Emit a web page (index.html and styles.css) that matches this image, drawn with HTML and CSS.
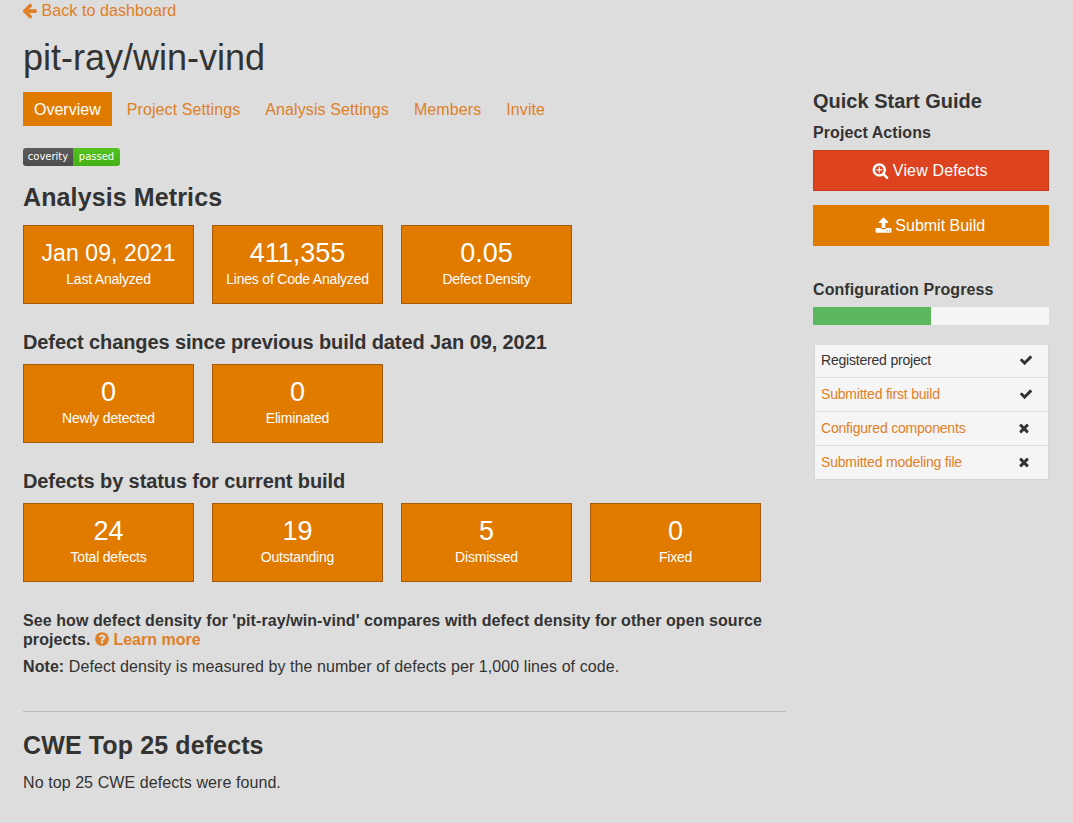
FILE: index.html
```html
<!DOCTYPE html>
<html lang="en">
<head>
<meta charset="utf-8">
<title>pit-ray/win-vind</title>
<link rel="stylesheet" href="styles.css">
</head>
<body>
<div class="page">
  <main class="main">
    <a class="back" href="#"><svg class="icon icon-back" viewBox="0 0 1792 1792"><path d="M1664 896v128q0 53-32.500 90.500t-84.500 37.500h-704l293 294q38 36 38 90t-38 90l-75 76q-37 37-90 37-52 0-91-37l-651-652q-37-37-37-90 0-52 37-91l651-650q38-38 91-38 52 0 90 38l75 74q38 38 38 91t-38 91l-293 293h704q52 0 84.500 37.500t32.500 90.500z"/></svg> Back to dashboard</a>
    <h1 class="title">pit-ray/win-vind</h1>
    <nav class="tabs">
      <a class="tab active" href="#">Overview</a>
      <a class="tab" href="#">Project Settings</a>
      <a class="tab" href="#">Analysis Settings</a>
      <a class="tab" href="#">Members</a>
      <a class="tab" href="#">Invite</a>
    </nav>
    <div class="badge"><span class="badge-l">coverity</span><span class="badge-r">passed</span></div>
    <h2 class="h-metrics">Analysis Metrics</h2>
    <div class="tiles">
      <div class="tile"><div class="num num-date">Jan 09, 2021</div><div class="lbl">Last Analyzed</div></div>
      <div class="tile"><div class="num">411,355</div><div class="lbl">Lines of Code Analyzed</div></div>
      <div class="tile"><div class="num">0.05</div><div class="lbl">Defect Density</div></div>
    </div>
    <h3 class="h-sub">Defect changes since previous build dated Jan 09, 2021</h3>
    <div class="tiles">
      <div class="tile"><div class="num">0</div><div class="lbl">Newly detected</div></div>
      <div class="tile"><div class="num">0</div><div class="lbl">Eliminated</div></div>
    </div>
    <h3 class="h-sub">Defects by status for current build</h3>
    <div class="tiles">
      <div class="tile"><div class="num">24</div><div class="lbl">Total defects</div></div>
      <div class="tile"><div class="num">19</div><div class="lbl">Outstanding</div></div>
      <div class="tile"><div class="num">5</div><div class="lbl">Dismissed</div></div>
      <div class="tile"><div class="num">0</div><div class="lbl">Fixed</div></div>
    </div>
    <p class="compare">See how defect density for 'pit-ray/win-vind' compares with defect density for other open source projects. <a class="learn" href="#"><svg class="icon icon-learn" viewBox="0 0 1792 1792"><path d="M1024 1376v-192q0-14-9-23t-23-9h-192q-14 0-23 9t-9 23v192q0 14 9 23t23 9h192q14 0 23-9t9-23zm256-672q0-88-55.500-163t-138.500-116-170-41q-243 0-371 213-15 24 8 42l132 100q7 6 19 6 16 0 25-12 53-68 86-92 34-24 86-24 48 0 85.500 26t37.500 59q0 38-20 61t-68 45q-63 28-115.500 86.500t-52.500 125.500v36q0 14 9 23t23 9h192q14 0 23-9t9-23q0-19 21.500-49.500t54.500-49.500q32-18 49-28.500t46-35 44.500-48 28-60.500 12.500-81zm384 192q0 209-103 385.500t-279.500 279.500-385.500 103-385.500-103-279.500-279.500-103-385.500 103-385.500 279.500-279.500 385.500-103 385.500 103 279.500 279.500 103 385.500z"/></svg> Learn more</a></p>
    <p class="note"><b>Note:</b> Defect density is measured by the number of defects per 1,000 lines of code.</p>
    <hr class="rule">
    <h2 class="h-cwe">CWE Top 25 defects</h2>
    <p class="none">No top 25 CWE defects were found.</p>
  </main>
  <aside class="side">
    <h3 class="guide">Quick Start Guide</h3>
    <h4 class="side-h">Project Actions</h4>
    <a class="btn btn-red" href="#"><svg class="icon icon-btn" viewBox="0 0 1792 1792"><path d="M1088 800v64q0 13-9.500 22.500t-22.500 9.500h-224v224q0 13-9.500 22.500t-22.500 9.500h-64q-13 0-22.500-9.500t-9.500-22.500v-224h-224q-13 0-22.500-9.500t-9.500-22.500v-64q0-13 9.500-22.500t22.500-9.500h224v-224q0-13 9.500-22.500t22.500-9.500h64q13 0 22.500 9.500t9.500 22.500v224h224q13 0 22.500 9.500t9.500 22.500zm128 32q0-185-131.500-316.500t-316.500-131.500-316.500 131.500-131.500 316.500 131.500 316.500 316.500 131.500 316.500-131.500 131.500-316.500zm512 832q0 53-37.500 90.500t-90.500 37.500q-54 0-90-38l-343-342q-179 124-399 124-143 0-273.500-55.500t-225-150-150-225-55.500-273.500 55.500-273.500 150-225 225-150 273.500-55.500 273.500 55.500 225 150 150 225 55.500 273.500q0 220-124 399l343 343q37 37 37 90z"/></svg> View Defects</a>
    <a class="btn btn-orange" href="#"><svg class="icon icon-btn" viewBox="0 0 1792 1792"><path d="M1344 1472q0-26-19-45t-45-19-45 19-19 45 19 45 45 19 45-19 19-45zm256 0q0-26-19-45t-45-19-45 19-19 45 19 45 45 19 45-19 19-45zm128-224v320q0 40-28 68t-68 28h-1472q-40 0-68-28t-28-68v-320q0-40 28-68t68-28h427q21 56 70.500 92t110.500 36h256q61 0 110.500-36t70.500-92h427q40 0 68 28t28 68zm-325-648q-17 40-59 40h-256v448q0 26-19 45t-45 19h-256q-26 0-45-19t-19-45v-448h-256q-42 0-59-40-17-39 14-69l448-448q18-19 45-19t45 19l448 448q31 30 14 69z"/></svg> Submit Build</a>
    <h4 class="side-h progress-h">Configuration Progress</h4>
    <div class="progress"><div class="progress-bar" style="width: 50%"></div></div>
    <ul class="checklist">
      <li><span>Registered project</span><svg class="mark" viewBox="0 0 1792 1792"><path d="M1671 566q0 40-28 68l-724 724-136 136q-28 28-68 28t-68-28l-136-136-362-362q-28-28-28-68t28-68l136-136q28-28 68-28t68 28l294 295 656-657q28-28 68-28t68 28l136 136q28 28 28 68z"/></svg></li>
      <li><a href="#">Submitted first build</a><svg class="mark" viewBox="0 0 1792 1792"><path d="M1671 566q0 40-28 68l-724 724-136 136q-28 28-68 28t-68-28l-136-136-362-362q-28-28-28-68t28-68l136-136q28-28 68-28t68 28l294 295 656-657q28-28 68-28t68 28l136 136q28 28 28 68z"/></svg></li>
      <li><a href="#">Configured components</a><svg class="mark mark-x" viewBox="0 0 1792 1792"><path d="M1490 1322q0 40-28 68l-136 136q-28 28-68 28t-68-28l-294-294-294 294q-28 28-68 28t-68-28l-136-136q-28-28-28-68t28-68l294-294-294-294q-28-28-28-68t28-68l136-136q28-28 68-28t68 28l294 294 294-294q28-28 68-28t68 28l136 136q28 28 28 68t-28 68l-294 294 294 294q28 28 28 68z"/></svg></li>
      <li><a href="#">Submitted modeling file</a><svg class="mark mark-x" viewBox="0 0 1792 1792"><path d="M1490 1322q0 40-28 68l-136 136q-28 28-68 28t-68-28l-294-294-294 294q-28 28-68 28t-68-28l-136-136q-28-28-28-68t28-68l294-294-294-294q-28-28-28-68t28-68l136-136q28-28 68-28t68 28l294 294 294-294q28-28 68-28t68 28l136 136q28 28 28 68t-28 68l-294 294 294 294q28 28 28 68z"/></svg></li>
    </ul>
  </aside>
</div>
</body>
</html>
```
FILE: styles.css
```css
* { box-sizing: border-box; }
html, body { margin: 0; padding: 0; height: 100%; overflow: hidden; }
body {
  background: #dddddd;
  color: #333333;
  font-family: "Liberation Sans", Arial, sans-serif;
  font-size: 16px;
  line-height: 20px;
  letter-spacing: 0.08px;
}
a { color: #df7f26; text-decoration: none; }
.icon { width: 1em; height: 1em; fill: currentColor; vertical-align: -2px; }
.icon-back { width: 17px; height: 17px; margin: 0 -1px 0 -2px; vertical-align: -3px; }
.icon-btn { width: 17px; height: 17px; margin: 0 -1px 0 -2px; vertical-align: -3px; }
.icon-learn { margin: 0 -1px 0 -1px; }
.page { display: flex; gap: 27px; padding: 0 24px 0 23px; }
.main { width: 763px; flex: none; }
.side { width: 236px; flex: none; padding-top: 90px; }
.back { display: block; height: 20px; padding-top: 1px; }
.title { margin: 18px 0 0; font-size: 36px; line-height: 40px; font-weight: 400; letter-spacing: 0; }
.tabs { display: flex; margin-top: 14px; height: 34px; letter-spacing: 0.1px; }
.tab { padding: 8px 11px 6px; margin-right: 3px; line-height: 20px; }
.tab.active { background: #e07b00; color: #fff; margin-right: 4px; letter-spacing: 0; }
.badge { display: inline-flex; margin-top: 22px; height: 18px; border-radius: 3px; overflow: hidden; font-family: "DejaVu Sans", Verdana, sans-serif; font-size: 10px; line-height: 18px; letter-spacing: 0; color: #fff; vertical-align: top; }
.badge-l { width: 50px; background: linear-gradient(#5c5c5c, #4c4c4c); text-align: center; }
.badge-r { width: 47px; background: linear-gradient(#54c222, #44b014); text-align: center; }
.h-metrics { margin: 17px 0 0; font-size: 25px; line-height: 28px; font-weight: 700; letter-spacing: 0.12px; }
.tiles { display: flex; gap: 18px; margin-top: 14px; }
.tile { width: 171px; height: 79px; background: #e07b00; border: 1px solid #a35a0b; color: #fff; text-align: center; padding-top: 13px; letter-spacing: 0; }
.num { font-size: 27px; line-height: 28px; }
.num-date { font-size: 23px; letter-spacing: 0.1px; }
.lbl { font-size: 14px; line-height: 20px; margin-top: 2px; letter-spacing: -0.2px; }
.h-sub { margin: 26px 0 0; font-size: 20px; line-height: 24px; font-weight: 700; letter-spacing: -0.1px; }
.h-sub + .tiles { margin-top: 10px; }
.compare { margin: 29px 0 0; font-weight: 700; line-height: 19px; }
.learn { letter-spacing: 0; }
.note { margin: 8px 0 0; }
.rule { margin: 34px 0 0; border: 0; border-top: 1px solid #bbbbbb; }
.h-cwe { margin: 19px 0 0; font-size: 25px; line-height: 28px; font-weight: 700; letter-spacing: 0.12px; }
.none { margin: 14px 0 0; }
.guide { margin: 0; font-size: 20px; line-height: 22px; font-weight: 700; letter-spacing: 0; }
.side-h { margin: 11px 0 0; font-size: 16px; line-height: 20px; font-weight: 700; }
.btn { display: block; height: 41px; margin-top: 7px; color: #fff; text-align: center; line-height: 40px; letter-spacing: 0; }
.btn-red { background: #de4320; border: 1px solid #c53c1c; line-height: 39px; letter-spacing: 0.15px; }
.btn-orange { background: #e07b00; margin-top: 14px; line-height: 41px; }
.progress-h { margin-top: 34px; }
.progress { height: 18px; margin-top: 7px; background: #f5f5f5; }
.progress-bar { height: 100%; background: #5cb85c; }
.checklist { list-style: none; margin: 19px 0 0 1px; padding: 0; width: 235px; font-size: 14px; line-height: 20px; letter-spacing: -0.2px; background: #f5f5f5; border: 1px solid #d6d6d6; border-top: 0; }
.checklist li { display: flex; justify-content: space-between; align-items: center; height: 34px; padding: 0 15px 2px 6px; border-top: 1px solid #dddddd; }
.checklist li:first-child { height: 33px; padding-bottom: 2px; }
.mark { width: 14px; height: 14px; fill: #333333; }
.mark-x { margin-right: 2px; }
```
